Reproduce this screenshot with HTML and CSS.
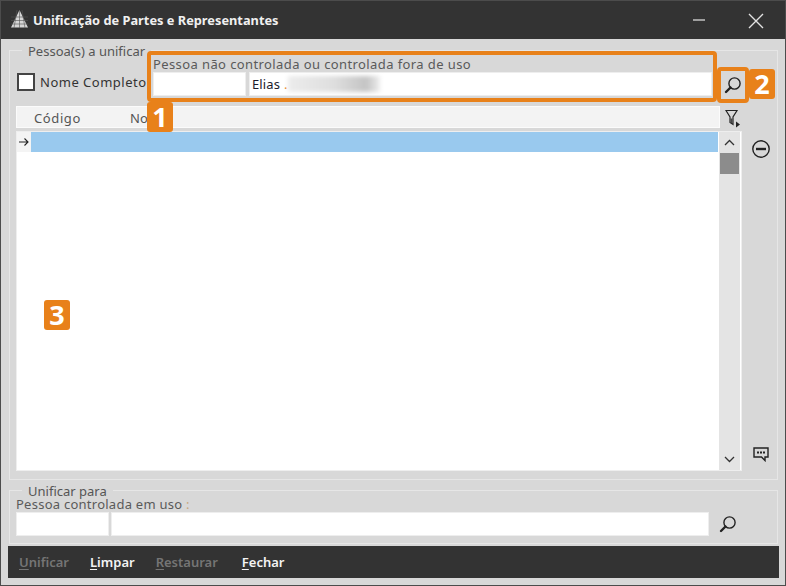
FILE: index.html
```html
<!DOCTYPE html>
<html lang="pt">
<head>
<meta charset="utf-8">
<title>Unificação de Partes e Representantes</title>
<link rel="stylesheet" href="styles.css">
</head>
<body>
<div class="window">
  <header class="titlebar">
    <svg class="app-icon" width="17" height="18" viewBox="0 0 17 18">
      <path d="M8.5 0 L17 17.5 H0 Z" fill="#d6d6d6"/>
      <path d="M0 7H17M0 10.5H17M0 14H17M6 0 L3 18M8.5 0V18M11 0L14 18" stroke="#555" stroke-width=".6" fill="none"/>
    </svg>
    <span class="title-text">Unificação de Partes e Representantes</span>
    <svg class="win-min" width="12" height="2" viewBox="0 0 12 2"><path d="M0 1H12" stroke="#d8d8d8" stroke-width="1.3"/></svg>
    <svg class="win-close" width="16" height="16" viewBox="0 0 16 16"><path d="M1 1L15 15M15 1L1 15" stroke="#e2e2e2" stroke-width="1.4" fill="none"/></svg>
  </header>

  <main class="content">
    <section class="group group-top">
      <span class="legend">Pessoa(s) a unificar</span>
      <div class="pick-row">
        <label class="check"><span class="check-box"></span><span>Nome Completo</span></label>
        <div class="field">
          <div class="field-label">Pessoa não controlada ou controlada fora de uso</div>
          <div class="inputs">
            <div class="input input-code"></div>
            <div class="input input-name"><span>Elias</span><span class="dot">.</span><span class="blur"></span></div>
          </div>
        </div>
        <button class="search-btn" type="button" aria-label="Pesquisar">
          <svg width="18" height="18" viewBox="0 0 18 18"><circle cx="10.5" cy="7.5" r="5.6" fill="none" stroke="#222" stroke-width="1.4"/><path d="M6.5 11.5L2 16" stroke="#222" stroke-width="2.4" stroke-linecap="round"/></svg>
        </button>
      </div>
      <div class="list-area">
        <div class="list-col">
          <div class="list-head-row">
            <div class="list-head"><span class="col-code">Código</span><span class="col-name">Nome</span></div>
            <svg class="filter-icon" width="15" height="19" viewBox="0 0 15 19"><path d="M1 1.5H12L8 8V15.5L5 13.5V8Z" fill="none" stroke="#222" stroke-width="1.2"/><path d="M5.5 9.5H7.5V14H5.5Z" fill="#444"/><path d="M11 12.5L15 15.5L11 18.5Z" fill="#222"/></svg>
          </div>
          <div class="grid">
            <div class="grid-body">
              <div class="row">
                <div class="row-mark"><svg width="10" height="10" viewBox="0 0 10 10"><path d="M0 5H9M5.5 1.5L9 5L5.5 8.5" fill="none" stroke="#222" stroke-width="1.1"/></svg></div>
                <div class="row-cell"></div>
              </div>
            </div>
            <div class="scrollbar">
              <svg class="chev" width="11" height="7" viewBox="0 0 11 7"><path d="M1 6L5.5 1.5L10 6" fill="none" stroke="#333" stroke-width="1.3"/></svg>
              <div class="thumb"></div>
              <div class="spacer"></div>
              <svg class="chev" width="11" height="7" viewBox="0 0 11 7"><path d="M1 1L5.5 5.5L10 1" fill="none" stroke="#333" stroke-width="1.3"/></svg>
            </div>
          </div>
        </div>
        <div class="side">
          <svg width="20" height="20" viewBox="0 0 20 20"><circle cx="10" cy="10" r="8.2" fill="none" stroke="#222" stroke-width="1.4"/><path d="M5 10H15" stroke="#222" stroke-width="2.4"/></svg>
          <svg width="16" height="15" viewBox="0 0 16 15"><path d="M1 1H15V10H12V13.5L8.5 10H1Z" fill="none" stroke="#222" stroke-width="1.4"/><path d="M4 5.5H6M7 5.5H9M10 5.5H12" stroke="#222" stroke-width="2"/></svg>
        </div>
      </div>
    </section>

    <section class="group group-bottom">
      <span class="legend">Unificar para</span>
      <div class="field-label label-bottom">Pessoa controlada em uso <span class="colon">:</span></div>
      <div class="bottom-row">
        <div class="input input-code2"></div>
        <div class="input input-name2"></div>
        <svg class="search-plain" width="18" height="18" viewBox="0 0 18 18"><circle cx="10.5" cy="7.5" r="5.6" fill="none" stroke="#222" stroke-width="1.4"/><path d="M6.5 11.5L2 16" stroke="#222" stroke-width="2.4" stroke-linecap="round"/></svg>
      </div>
    </section>

    <nav class="actions">
      <span class="action disabled"><u>U</u>nificar</span>
      <span class="action"><u>L</u>impar</span>
      <span class="action disabled wide"><u>R</u>estaurar</span>
      <span class="action"><u>F</u>echar</span>
    </nav>
  </main>

  <div class="callout callout-1"></div>
  <div class="callout callout-2"></div>
  <div class="badge badge-1">1</div>
  <div class="badge badge-2">2</div>
  <div class="badge badge-3">3</div>
</div>
</body>
</html>
```
FILE: styles.css
```css
* { box-sizing: border-box; }
html, body { margin: 0; padding: 0; }
body {
  width: 786px;
  height: 586px;
  overflow: hidden;
  font-family: "Noto Sans", "Open Sans", sans-serif;
  font-size: 13px;
  color: #555;
}
.window {
  position: relative;
  width: 786px;
  height: 586px;
  border: 1px solid #4c4c4c;
  background: #d8d8d8;
  display: flex;
  flex-direction: column;
}
.titlebar {
  height: 38px;
  flex: none;
  background: #333;
  display: flex;
  align-items: center;
  padding: 0 21px 0 10px;
  color: #f0f0f0;
}
.app-icon { margin-right: 5px; margin-top: -2px; }
.title-text { font-weight: 700; font-size: 12.8px; flex: 1; line-height: 16px; }
.win-min { margin-right: 43px; }
.win-close { margin-top: 2px; }

.content {
  flex: 1;
  display: flex;
  flex-direction: column;
  padding: 11px 7px 0 8px;
}
.group {
  position: relative;
  border: 1px solid #e6e6e6;
}
.group-top { height: 430px; padding: 0 0 0 6px; }
.group-bottom { height: 54px; margin-top: 10px; padding: 0 0 0 6px; }
.legend {
  position: absolute;
  left: 12px;
  top: -7px;
  padding: 0 6px;
  background: #d8d8d8;
  line-height: 14px;
}

.pick-row {
  display: flex;
  align-items: flex-end;
  height: 45px;
}
.check {
  display: flex;
  align-items: center;
  width: 137px;
  height: 24px;
  padding-left: 1px;
  margin-bottom: 2px;
  color: #333;
  letter-spacing: .5px;
}
.check-box {
  width: 18px;
  height: 18px;
  background: #fff;
  border: 2px solid #444;
  margin-right: 5px;
  flex: none;
}
.field { width: 559px; }
.field-label { line-height: 14px; padding-bottom: 1px; white-space: nowrap; letter-spacing: .4px; color: #5a5a5a; }
.inputs { display: flex; gap: 3px; }
.input { height: 24px; background: #fff; border: 1px solid #eee; }
.input-code { width: 93px; flex: none; }
.input-name {
  flex: 1;
  display: flex;
  align-items: center;
  padding-left: 2px;
  color: #1c1c2c;
  letter-spacing: .1px;
}
.dot { color: #e8811a; margin-left: 4px; }
.blur {
  width: 92px;
  height: 16px;
  background: linear-gradient(90deg, #ececec, #dedede 50%, #c4c4c4 85%, #eee);
  filter: blur(2px);
}
.search-btn {
  width: 21px;
  height: 25px;
  margin-left: 10px;
  padding: 2px 0 0;
  border: 0;
  background: transparent;
  display: flex;
  align-items: center;
  justify-content: center;
}

.list-area { display: flex; margin-top: 10px; }
.list-col { width: 726px; flex: none; }
.list-head-row { display: flex; height: 25px; }
.list-head {
  width: 704px;
  height: 22px;
  background: #f3f3f3;
  border: 1px solid #fbfbfb;
  line-height: 22px;
  display: flex;
  color: #555;
}
.col-code { width: 113px; padding-left: 17px; letter-spacing: .6px; }
.col-name { letter-spacing: .2px; }
.filter-icon { margin: 3px 0 0 5px; }
.grid {
  height: 340px;
  background: #fff;
  border: 1px solid #eee;
  display: flex;
}
.grid-body { flex: 1; }
.row { display: flex; height: 20px; }
.row-mark {
  width: 14px;
  background: #f4f4f4;
  display: flex;
  align-items: center;
  justify-content: center;
}
.row-cell { flex: 1; background: #99c9ee; }
.scrollbar {
  width: 21px;
  margin: 0 1px;
  background: #e4e4e4;
  display: flex;
  flex-direction: column;
  align-items: center;
  padding: 7px 0;
}
.thumb { width: 19px; height: 21px; background: #8c8c8c; margin-top: 7px; }
.spacer { flex: 1; }
.side {
  flex: 1;
  display: flex;
  flex-direction: column;
  justify-content: space-between;
  align-items: center;
  padding: 33px 0 0;
  height: 356px;
  margin-left: 2px;
}
.label-bottom { padding-top: 6px; padding-bottom: 0; letter-spacing: .25px; line-height: 15px; }
.colon { color: #c9a77c; }
.bottom-row { display: flex; align-items: center; }
.input-code2 { width: 93px; }
.input-name2 { width: 598px; margin-left: 2px; }
.search-plain { margin-left: 10px; }

.actions {
  flex: none;
  margin: 2px 0 0 -1px;
  width: 771px;
  height: 32px;
  background: #333;
  display: flex;
  align-items: center;
  padding-left: 11px;
  font-weight: 600;
  color: #f4f4f4;
}
.action { margin-right: 21px; }
.action.wide { margin-right: 24px; }
.action u { text-underline-offset: 2px; }
.action.disabled { color: #757575; }

.callout {
  position: absolute;
  border: 4px solid #e8811a;
  border-radius: 4px;
}
.callout-1 { left: 146px; top: 50px; width: 570px; height: 51px; }
.callout-2 { left: 716px; top: 66px; width: 32px; height: 36px; }
.badge {
  position: absolute;
  width: 26px;
  height: 30px;
  background: #e8811a;
  color: #fff;
  font-family: "Open Sans", sans-serif;
  font-weight: 700;
  font-size: 27px;
  line-height: 30px;
  text-align: center;
  border-radius: 3px;
}
.badge-1 { left: 146px; top: 101px; }
.badge-2 { left: 748px; top: 68px; }
.badge-3 { left: 43px; top: 299px; }
```
